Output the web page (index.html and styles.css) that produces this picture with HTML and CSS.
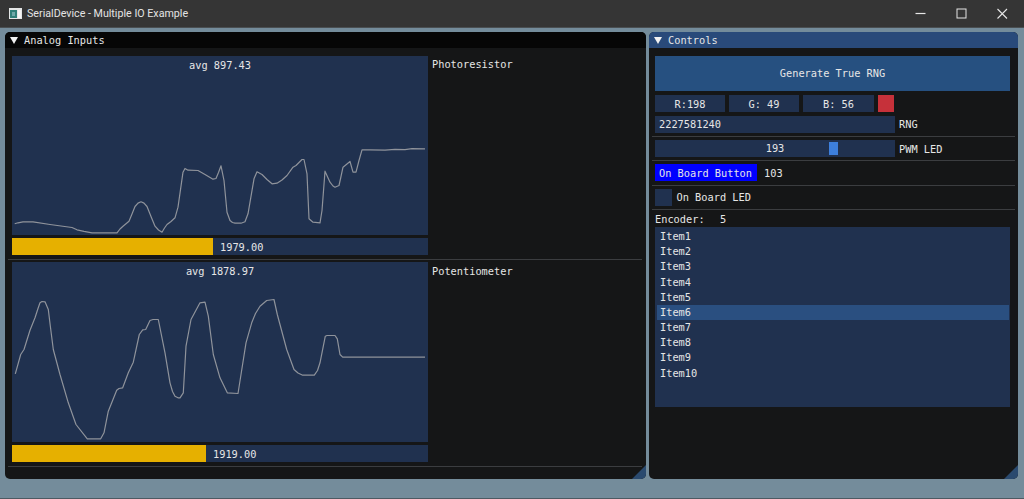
FILE: index.html
```html
<!DOCTYPE html>
<html lang="en">
<head>
    <meta charset="UTF-8">
    <title>SerialDevice - Multiple IO Example</title>
    <link rel="stylesheet" href="styles.css">
</head>
<body>
    <header class="titlebar">
        <svg class="app-icon" width="13" height="11" viewBox="0 0 13 11">
            <rect width="13" height="11" fill="#e4e6e6"/>
            <rect x="1" y="2" width="7" height="8" fill="#2f7f78"/>
            <rect x="3" y="4" width="3" height="4" fill="#6fa8a8"/>
            <rect x="9" y="2" width="3" height="8" fill="#f4f4f4"/>
        </svg>
        <span class="app-title">SerialDevice - Multiple IO Example</span>
        <div class="caption-buttons">
            <svg width="41" height="28" viewBox="0 0 41 28"><path d="M15.5 13.5h10" stroke="#e6e6e6" stroke-width="1.2"/></svg>
            <svg width="41" height="28" viewBox="0 0 41 28"><rect x="16" y="9" width="9" height="9" fill="none" stroke="#e6e6e6"/></svg>
            <svg width="41" height="28" viewBox="0 0 41 28"><path d="M15.5 9l9.5 9.5M25 9l-9.5 9.5" stroke="#e6e6e6" stroke-width="1.1"/></svg>
        </div>
    </header>

    <main class="desktop">
        <section class="window window-analog">
            <h2 class="win-title"><span class="arrow"></span>Analog Inputs</h2>
            <div class="win-body">
                <div class="plot-row">
                    <div class="plot">
                        <div class="plot-label">avg 897.43</div>
                        <svg class="plot-line" width="416" height="179.5" viewBox="12 55.5 416 179.5">
                            <polyline points="14.7,223.3 18,222.3 23,221.3 33,221.3 50,224 72,227 77,229.3 84,230.8 92,232.3 117,232.3 120,228.5 123,225.7 129,220.7 132,213.5 135,206 138,202.6 141,201.3 144,202.6 147,206 151,216 155,225.7 158.5,229.5 162,231.7 164.5,227.5 167,224 171,221 175,217.3 178,206.7 183,171.7 185,168 188,169.7 198,170 205,174 213,178.7 216,178 218.5,172 221,165.3 224,180 227,211.7 230,220 232.5,222 235,222.7 241,222.7 245,221.3 248,213.3 254,178.3 257,171.3 262,174 267,179 272,183.3 277,182.7 282,179.5 287,175 293,166.7 296,165 299,162 302,159 304,159 307,173.3 309,218.3 313,221.7 320,222.3 322,210 325,170.7 330,181.7 333,185.5 335,186.7 339,185 341,176 343,166.7 350,161 353,171.7 356,171.7 359,160 362,149.3 370,149.3 385,149.6 395,148.8 405,149.2 412,148.2 425,148.4"/>
                        </svg>
                    </div>
                    <span class="side-label">Photoresistor</span>
                </div>
                <div class="progress">
                    <div class="progress-fill fill-a"></div>
                    <span class="progress-text">1979.00</span>
                </div>
                <hr class="sep sep-analog">
                <div class="plot-row">
                    <div class="plot">
                        <div class="plot-label">avg 1878.97</div>
                        <svg class="plot-line" width="416" height="179.5" viewBox="12 262.5 416 179.5">
                            <polyline points="15.3,374.3 20.7,355 24,350 30,330.7 35,318.3 38,309 40,303.3 42,302 45,302.3 48.3,310 50.5,328 53.3,350 60,375 68.3,403.3 76,425 87.3,439.3 100.7,439.3 104,433.3 108.3,411.7 116.7,390.7 119,389 122.7,388.3 128.3,373.3 133.3,362.7 139.3,335 142.7,330.3 145.7,330 150,321 153,320 158.3,320 165,353.3 170,383.3 172.5,392 175,396.7 178,398.3 180,398.3 183.3,393.3 186,346.7 191,320 200,303.3 205,302.7 208.3,316.7 213.3,355 220,378.3 227.3,393.3 238,394 246,343.3 251.7,323.3 255.5,314 260,306.7 266.7,301 274,300 277.3,315 286.7,350 294,370 298,373.5 302.7,375.7 314.3,375.7 317.5,371 320,363.3 325.3,336.7 327,336 335,336 337.3,339.3 340,355 342.7,357.7 425,357.7"/>
                        </svg>
                    </div>
                    <span class="side-label">Potentiometer</span>
                </div>
                <div class="progress">
                    <div class="progress-fill fill-b"></div>
                    <span class="progress-text">1919.00</span>
                </div>
                <hr class="sep sep-analog">
            </div>
            <div class="grip"></div>
        </section>

        <section class="window window-controls">
            <h2 class="win-title win-title-active"><span class="arrow"></span>Controls</h2>
            <div class="win-body">
                <button class="rng-button">Generate True RNG</button>
                <div class="rgb-row">
                    <div class="rgb-cell">R:198</div>
                    <div class="rgb-cell">G: 49</div>
                    <div class="rgb-cell rgb-wide">B: 56</div>
                    <div class="swatch"></div>
                </div>
                <div class="field-row">
                    <div class="field field-left">2227581240</div>
                    <span>RNG</span>
                </div>
                <hr class="sep">
                <div class="field-row">
                    <div class="field slider">
                        <span>193</span>
                        <div class="slider-grab"></div>
                    </div>
                    <span>PWM LED</span>
                </div>
                <hr class="sep">
                <div class="button-row">
                    <span class="board-button">On Board Button</span>
                    <span>103</span>
                </div>
                <hr class="sep">
                <div class="check-row">
                    <div class="checkbox"></div>
                    <span>On Board LED</span>
                </div>
                <hr class="sep">
                <div class="encoder">Encoder:  5</div>
                <ul class="listbox">
                    <li>Item1</li>
                    <li>Item2</li>
                    <li>Item3</li>
                    <li>Item4</li>
                    <li>Item5</li>
                    <li class="selected">Item6</li>
                    <li>Item7</li>
                    <li>Item8</li>
                    <li>Item9</li>
                    <li>Item10</li>
                </ul>
            </div>
            <div class="grip"></div>
        </section>
    </main>
</body>
</html>
```
FILE: styles.css
```css
* {
    box-sizing: border-box;
}
html, body {
    margin: 0;
    height: 100%;
    overflow: hidden;
}
body {
    display: flex;
    flex-direction: column;
    background: #748c9b;
    border-bottom: 1px solid #4d5a62;
    font-family: "DejaVu Sans Mono", "Liberation Mono", monospace;
    font-size: 10.3px;
    color: #e6e6e6;
}
.titlebar {
    display: flex;
    align-items: center;
    height: 28px;
    flex: none;
    padding-left: 9px;
    background: #353535;
    border-bottom: 1px solid #4a4f52;
}
.app-icon {
    margin-right: 5px;
}
.app-title {
    font-family: Roboto, "Liberation Sans", sans-serif;
    font-size: 10.7px;
    color: #e4e4e4;
}
.caption-buttons {
    display: flex;
    margin-left: auto;
    margin-right: 1px;
}
.desktop {
    display: flex;
    gap: 3px;
    padding: 4px 6px 0 5px;
}
.window {
    position: relative;
    height: 446.5px;
    background: #151617;
    border-radius: 5px;
    overflow: hidden;
}
.window-analog {
    width: 641px;
}
.window-controls {
    width: 369px;
}
.win-title {
    display: flex;
    align-items: center;
    height: 16px;
    margin: 0;
    padding-left: 5px;
    background: #060606;
    font-size: inherit;
    font-weight: normal;
}
.win-title-active {
    background: #294a7a;
}
.arrow {
    width: 0;
    height: 0;
    margin-right: 6px;
    border-left: 4px solid transparent;
    border-right: 4px solid transparent;
    border-top: 7px solid #f2f2f2;
}
.win-body {
    display: flex;
    flex-direction: column;
    padding: 7.5px 7px 0;
}
.sep {
    flex: none;
    height: 1px;
    width: auto;
    margin: 3.2px -5px 3.13px -3px;
    border: 0;
    background: #3b3d40;
}
.sep-analog {
    margin: 3.6px -3px 2.7px -4px;
}
.plot-row {
    display: flex;
    gap: 4px;
    height: 179.5px;
    margin-bottom: 3px;
}
.plot {
    position: relative;
    width: 416px;
    flex: none;
    background: #20314f;
}
.plot-label {
    padding-top: 3px;
    text-align: center;
}
.plot-line {
    position: absolute;
    left: 0;
    top: 0;
}
.plot-line polyline {
    fill: none;
    stroke: #8f939b;
    stroke-width: 1.2;
    stroke-linejoin: round;
}
.side-label {
    padding-top: 2.5px;
}
.progress {
    display: flex;
    align-items: center;
    width: 416px;
    height: 17.2px;
    background: #20314f;
}
.progress-fill {
    height: 100%;
    background: #e6b000;
}
.fill-a {
    width: 201px;
}
.fill-b {
    width: 194px;
}
.progress-text {
    margin-left: 7px;
}
.window-controls .win-body {
    padding: 7.5px 8px 0 6px;
}
.rng-button {
    height: 35.5px;
    padding: 0;
    border: 0;
    background: #265080;
    color: #e6e6e6;
    font: inherit;
}
.rgb-row {
    display: flex;
    gap: 4px;
    height: 17px;
    margin-top: 4px;
}
.rgb-cell {
    display: flex;
    align-items: center;
    justify-content: center;
    width: 70px;
    background: #20314f;
}
.rgb-wide {
    width: 71px;
}
.swatch {
    width: 16px;
    background: #c6313a;
}
.field-row {
    display: flex;
    align-items: center;
    gap: 4px;
    height: 17px;
    margin-top: 3.7px;
}
.field {
    width: 240px;
    height: 17px;
    background: #20314f;
    line-height: 17px;
}
.field-left {
    padding-left: 4px;
}
.sep + .field-row {
    margin-top: 0;
}
.slider {
    position: relative;
    text-align: center;
}
.slider-grab {
    position: absolute;
    left: 173.5px;
    top: 1.7px;
    width: 9px;
    height: 13.6px;
    background: #3d7fdc;
}
.button-row {
    display: flex;
    align-items: center;
    gap: 7px;
    height: 17px;
}
.board-button {
    display: flex;
    align-items: center;
    height: 17px;
    padding: 0 5px 0 4px;
    background: #0000ff;
}
.check-row {
    display: flex;
    align-items: center;
    gap: 4.5px;
    height: 17px;
}
.checkbox {
    width: 17px;
    height: 17px;
    background: #20314f;
}
.encoder {
    height: 12px;
    white-space: pre;
    word-spacing: 1.5px;
    line-height: 12px;
}
.listbox {
    height: 179.4px;
    margin: 2.5px 0 0;
    padding: 1.5px 1.5px;
    list-style: none;
    background: #20314f;
}
.listbox li {
    height: 15.2px;
    padding-left: 3.5px;
    line-height: 15.2px;
}
.listbox .selected {
    background: #2a4f80;
}
.grip {
    position: absolute;
    right: 0;
    bottom: 0;
    width: 0;
    height: 0;
    border-left: 14px solid transparent;
    border-bottom: 14px solid #2a4a6f;
}
```
